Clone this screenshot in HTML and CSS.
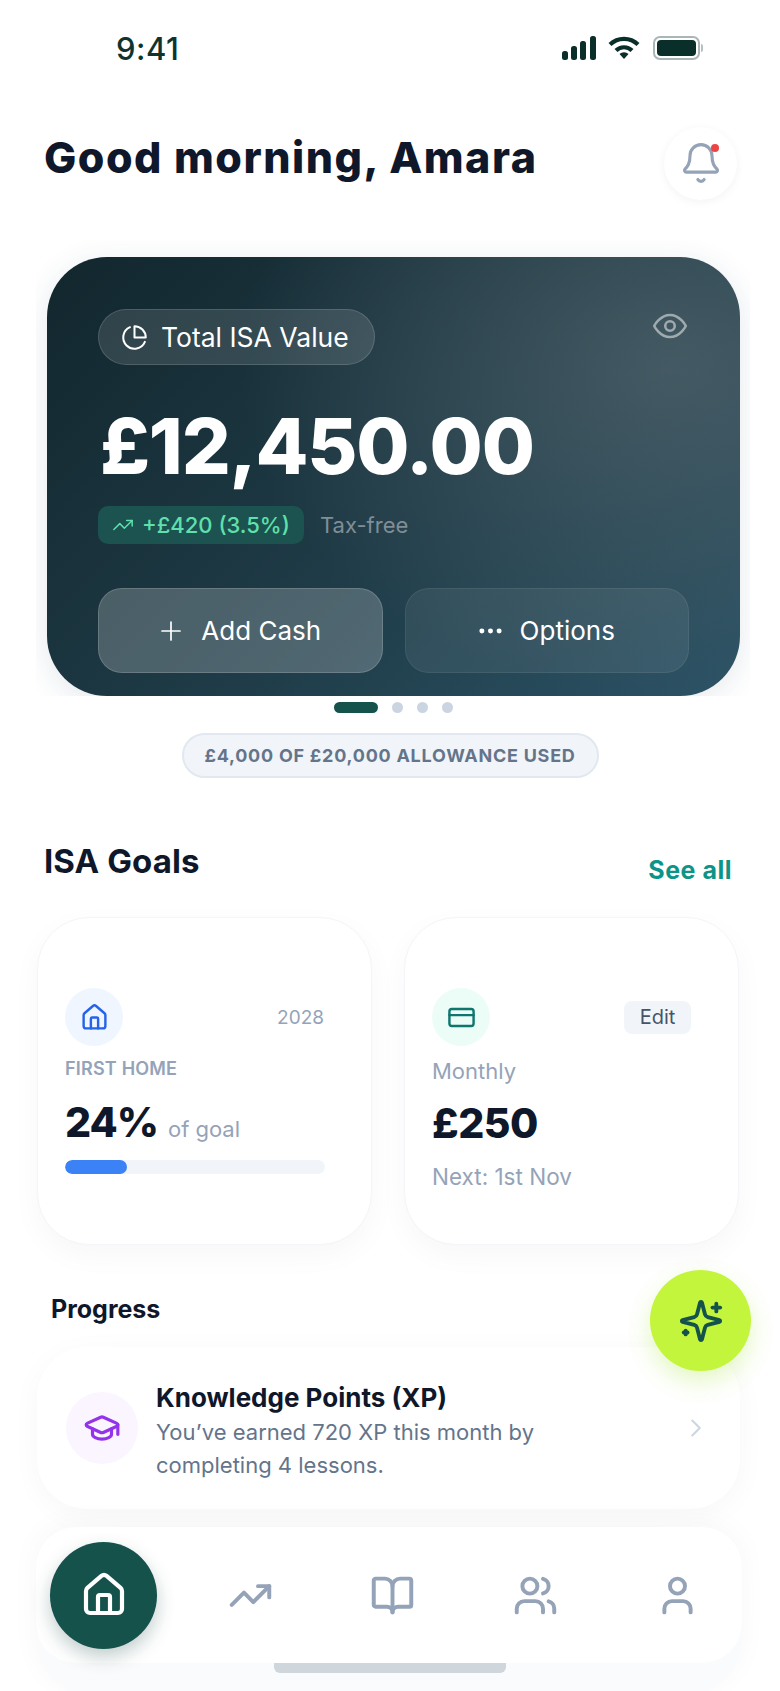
FILE: index.html
```html
<!DOCTYPE html>
<html lang="en">
<head>
<meta charset="utf-8">
<title>ISA Home</title>
<link rel="stylesheet" href="styles.css">
</head>
<body>
<div class="screen">
  <div class="status">
    <span class="time">9:41</span>
    <div class="status-icons">
      <svg class="sig" viewBox="0 0 36 24"><rect x="1" y="15" width="6" height="9" rx="2.5"/><rect x="10" y="10" width="6" height="14" rx="2.5"/><rect x="19" y="5" width="6" height="19" rx="2.5"/><rect x="29" y="0" width="6" height="24" rx="2.5"/></svg>
      <svg class="wifi" viewBox="0 0 32 24"><path d="M2 8.5a20 20 0 0 1 28 0"/><path d="M8 14.5a11.5 11.5 0 0 1 16 0"/><path class="wifi-dot" d="M16 23l-4.5-5a6.5 6.5 0 0 1 9 0z"/></svg>
      <div class="battery"><div class="battery-fill"></div></div>
      <div class="battery-cap"></div>
    </div>
  </div>

  <header class="top">
    <h1 class="greeting">Good morning, Amara</h1>
    <div class="bell">
      <svg class="ic bell-ic" viewBox="0 0 24 24"><path d="M10.268 21a2 2 0 0 0 3.464 0"/><path d="M3.262 15.326A1 1 0 0 0 4 17h16a1 1 0 0 0 .74-1.673C19.41 13.956 18 12.499 18 8A6 6 0 0 0 6 8c0 4.499-1.411 5.956-2.738 7.326"/></svg>
      <span class="bell-dot"></span>
    </div>
  </header>

  <div class="carousel">
    <section class="hero">
      <div class="hero-top">
        <div class="tag">
          <svg class="ic tag-ic" viewBox="0 0 24 24"><path d="M21.21 15.89A10 10 0 1 1 8 2.83"/><path d="M22 12A10 10 0 0 0 12 2v10z"/></svg>
          <span>Total ISA Value</span>
        </div>
        <svg class="ic eye" viewBox="0 0 24 24"><path d="M2 12s3.6-7 10-7 10 7 10 7-3.6 7-10 7-10-7-10-7Z"/><circle cx="12" cy="12" r="3"/></svg>
      </div>
      <div class="amount">£12,450.00</div>
      <div class="gain-row">
        <div class="gain">
          <svg class="ic gain-ic" viewBox="0 0 24 24"><polyline points="22 7 13.5 15.5 8.5 10.5 2 17"/><polyline points="16 7 22 7 22 13"/></svg>
          <span>+£420 (3.5%)</span>
        </div>
        <span class="taxfree">Tax-free</span>
      </div>
      <div class="actions">
        <div class="btn btn-primary">
          <svg class="ic btn-ic" viewBox="0 0 24 24"><path d="M3 12h18"/><path d="M12 3v18"/></svg>
          <span>Add Cash</span>
        </div>
        <div class="btn btn-ghost">
          <svg class="dots-ic" viewBox="0 0 24 6"><circle cx="3" cy="3" r="2.6"/><circle cx="12" cy="3" r="2.6"/><circle cx="21" cy="3" r="2.6"/></svg>
          <span>Options</span>
        </div>
      </div>
    </section>
  </div>

  <div class="pager">
    <span class="pager-active"></span>
    <span class="pager-dot"></span>
    <span class="pager-dot"></span>
    <span class="pager-dot"></span>
  </div>

  <div class="allowance-row"><div class="allowance">£4,000 OF £20,000 ALLOWANCE USED</div></div>

  <div class="section-head">
    <h2 class="section-title">ISA Goals</h2>
    <span class="see-all">See all</span>
  </div>

  <div class="cards">
    <article class="card">
      <div class="card-head">
        <div class="circle circle-blue">
          <svg class="ic circle-ic" viewBox="0 0 24 24"><path d="M15 21v-8a1 1 0 0 0-1-1h-4a1 1 0 0 0-1 1v8"/><path d="M3 10a2 2 0 0 1 .709-1.528l7-5.999a2 2 0 0 1 2.582 0l7 5.999A2 2 0 0 1 21 10v9a2 2 0 0 1-2 2H5a2 2 0 0 1-2-2z"/></svg>
        </div>
        <span class="year">2028</span>
      </div>
      <div class="eyebrow">FIRST HOME</div>
      <div class="pct-line"><span class="big big-pct">24%</span><span class="of-goal">of goal</span></div>
      <div class="track"><div class="fill" style="width:24%"></div></div>
    </article>
    <article class="card">
      <div class="card-head">
        <div class="circle circle-green">
          <svg class="ic circle-ic" viewBox="0 0 24 24"><rect x="2" y="5" width="20" height="14" rx="2"/><line x1="2" y1="10" x2="22" y2="10"/></svg>
        </div>
        <span class="edit">Edit</span>
      </div>
      <div class="monthly">Monthly</div>
      <div class="big big-money">£250</div>
      <div class="next">Next: 1st Nov</div>
    </article>
  </div>

  <h3 class="progress-title">Progress</h3>

  <div class="xp">
    <div class="xp-circle">
      <svg class="ic xp-ic" viewBox="0 0 24 24"><path d="M21.42 10.922a1 1 0 0 0-.019-1.838L12.83 5.18a2 2 0 0 0-1.66 0L2.6 9.08a1 1 0 0 0 0 1.832l8.57 3.908a2 2 0 0 0 1.66 0z"/><path d="M22 10v6"/><path d="M6 12.5V16a6 3 0 0 0 12 0v-3.5"/></svg>
    </div>
    <div class="xp-text">
      <div class="xp-title">Knowledge Points (XP)</div>
      <div class="xp-desc">You’ve earned 720 XP this month by<br>completing 4 lessons.</div>
    </div>
    <svg class="ic chev" viewBox="0 0 24 24"><path d="m9 18 6-6-6-6"/></svg>
  </div>

  <nav class="nav">
    <div class="nav-inner">
      <div class="nav-home">
        <svg class="ic nav-home-ic" viewBox="0 0 24 24"><path d="M15 21v-8a1 1 0 0 0-1-1h-4a1 1 0 0 0-1 1v8"/><path d="M3 10a2 2 0 0 1 .709-1.528l7-5.999a2 2 0 0 1 2.582 0l7 5.999A2 2 0 0 1 21 10v9a2 2 0 0 1-2 2H5a2 2 0 0 1-2-2z"/></svg>
      </div>
      <div class="nav-item"><svg class="ic nav-ic" viewBox="0 0 24 24"><polyline points="22 7 13.5 15.5 8.5 10.5 2 17"/><polyline points="16 7 22 7 22 13"/></svg></div>
      <div class="nav-item"><svg class="ic nav-ic" viewBox="0 0 24 24"><path d="M12 7v14"/><path d="M3 18a1 1 0 0 1-1-1V4a1 1 0 0 1 1-1h5a4 4 0 0 1 4 4 4 4 0 0 1 4-4h5a1 1 0 0 1 1 1v13a1 1 0 0 1-1 1h-6a3 3 0 0 0-3 3 3 3 0 0 0-3-3z"/></svg></div>
      <div class="nav-item"><svg class="ic nav-ic" viewBox="0 0 24 24"><path d="M16 21v-2a4 4 0 0 0-4-4H6a4 4 0 0 0-4 4v2"/><circle cx="9" cy="7" r="4"/><path d="M22 21v-2a4 4 0 0 0-3-3.87"/><path d="M16 3.13a4 4 0 0 1 0 7.75"/></svg></div>
      <div class="nav-item"><svg class="ic nav-ic" viewBox="0 0 24 24"><path d="M19 21v-2a4 4 0 0 0-4-4H9a4 4 0 0 0-4 4v2"/><circle cx="12" cy="7" r="4"/></svg></div>
    </div>
    <div class="home-bar"></div>
  </nav>

  <div class="fab">
    <svg class="ic fab-ic" viewBox="0 0 24 24"><path d="M9.937 15.5A2 2 0 0 0 8.5 14.063l-6.135-1.582a.5.5 0 0 1 0-.962L8.5 9.936A2 2 0 0 0 9.937 8.5l1.582-6.135a.5.5 0 0 1 .963 0L14.063 8.5A2 2 0 0 0 15.5 9.937l6.135 1.581a.5.5 0 0 1 0 .964L15.5 14.063a2 2 0 0 0-1.437 1.437l-1.582 6.135a.5.5 0 0 1-.963 0z"/><path d="M20 3v4"/><path d="M22 5h-4"/><path d="M4 17v2"/><path d="M5 18H3"/></svg>
  </div>
</div>
</body>
</html>
```
FILE: styles.css
```css
* { box-sizing: border-box; }
html, body { margin: 0; padding: 0; background: #fff; }
body { font-family: "Inter", "Liberation Sans", sans-serif; color: #0f172a; }
h1, h2, h3 { margin: 0; }
.screen { position: relative; width: 780px; height: 1691px; overflow: hidden; background: #fff; }
.ic { fill: none; stroke: currentColor; stroke-width: 2; stroke-linecap: round; stroke-linejoin: round; display: block; flex: none; }

.status { height: 96px; display: flex; align-items: center; justify-content: space-between; padding: 0 77px 0 116px; color: #0f3430; }
.time { font-size: 31px; font-weight: 500; letter-spacing: .5px; }
.status-icons { display: flex; align-items: center; }
.sig { width: 36px; height: 24px; fill: #0a2e2a; margin-right: 11px; }
.wifi { width: 32px; height: 24px; margin-right: 13px; fill: none; stroke: #0a2e2a; stroke-width: 4.2; }
.wifi-dot { fill: #0a2e2a; stroke: none; }
.battery { width: 47px; height: 24px; border: 2px solid #a9b6b8; border-radius: 7px; padding: 2px; }
.battery-fill { width: 100%; height: 100%; background: #0a2e2a; border-radius: 4px; }
.battery-cap { width: 2px; height: 8px; background: #b5c0c2; border-radius: 0 2px 2px 0; margin-left: 1px; }

.top { margin-top: 32px; height: 72px; display: flex; align-items: center; justify-content: space-between; padding: 0 43px 0 44px; }
.greeting { font-size: 43px; font-weight: 800; letter-spacing: 1.5px; color: #0f172a; line-height: 1; margin-top: -14px; white-space: nowrap; }
.bell { position: relative; width: 73px; height: 73px; border-radius: 50%; background: #fff; box-shadow: 0 2px 10px rgba(15, 23, 42, .05); display: flex; align-items: center; justify-content: center; color: #94a3b8; margin-top: -2px; }
.bell-ic { width: 44px; height: 44px; stroke-width: 1.7; }
.bell-dot { position: absolute; left: 47px; top: 17px; width: 8px; height: 8px; border-radius: 50%; background: #ef4444; }

.carousel { margin: 40px 30px 0 36px; padding: 17px 0 0 11px; height: 456px; overflow: hidden; }
.hero { width: 693px; height: 439px; border-radius: 60px; padding: 52px 51px 0; color: #fff; box-shadow: 0 6px 30px rgba(30, 64, 100, .12); background: radial-gradient(ellipse 62% 75% at 90% 25%, rgba(80, 98, 106, .75), rgba(80, 98, 106, 0) 100%), linear-gradient(135deg, #12262d 0%, #1f3c48 55%, #2c5366 100%); }
.hero-top { display: flex; justify-content: space-between; align-items: flex-start; }
.tag { height: 56px; width: 277px; border-radius: 28px; border: 1px solid rgba(255, 255, 255, .14); background: rgba(255, 255, 255, .12); display: flex; align-items: center; padding-left: 22px; gap: 13px; font-size: 26.5px; }
.tag-ic { width: 27px; height: 27px; stroke-width: 1.8; }
.eye { width: 38px; height: 38px; stroke-width: 1.6; color: rgba(255, 255, 255, .5); margin-top: -2px; }
.amount { margin-top: 36px; font-size: 77px; font-weight: 800; line-height: 90px; letter-spacing: -1.2px; margin-left: 2px; white-space: nowrap; }
.gain-row { margin-top: 15px; display: flex; align-items: center; gap: 16px; }
.gain { height: 38px; width: 206px; border-radius: 10px; background: #1c5250; color: #5fe0ad; display: flex; align-items: center; padding-left: 14px; gap: 8px; font-size: 22px; font-weight: 500; }
.gain-ic { width: 22px; height: 22px; stroke-width: 1.6; }
.taxfree { font-size: 22px; color: #7f8e97; }
.actions { margin-top: 44px; display: flex; gap: 22px; }
.btn { width: 284.5px; height: 85px; border-radius: 24px; display: flex; align-items: center; justify-content: center; font-size: 26px; font-weight: 400; border: 1px solid; }
.btn-primary { gap: 18px; background: rgba(255, 255, 255, .21); border-color: rgba(255, 255, 255, .16); }
.btn-ghost { gap: 18px; background: rgba(255, 255, 255, .07); border-color: rgba(255, 255, 255, .07); }
.btn-ic { width: 24px; height: 24px; stroke-width: 1.7; }
.dots-ic { width: 23px; height: 6px; fill: #fff; }

.pager { margin-top: 6px; height: 11px; display: flex; justify-content: center; gap: 14px; padding-left: 7px; }
.pager-active { width: 44px; border-radius: 6px; background: #14524b; }
.pager-dot { width: 11px; border-radius: 50%; background: #cbd5e1; }

.allowance-row { margin-top: 20px; display: flex; justify-content: center; }
.allowance { height: 45px; width: 417px; border-radius: 23px; background: #f1f5f9; border: 2px solid #e2e8f0; color: #64748b; font-size: 18px; font-weight: 700; letter-spacing: .75px; display: flex; align-items: center; justify-content: center; white-space: nowrap; }

.section-head { margin-top: 63px; height: 44px; display: flex; justify-content: space-between; padding: 0 48px 0 44px; }
.section-title { font-size: 33px; font-weight: 700; line-height: 40px; color: #0f172a; letter-spacing: .1px; }
.see-all { font-size: 25px; font-weight: 700; color: #0d9488; line-height: 30px; margin-top: 14px; letter-spacing: .5px; }

.cards { margin-top: 32px; padding-left: 37px; display: flex; gap: 32px; }
.card { width: 335px; height: 328px; border-radius: 52px; background: #fff; border: 1px solid #f3f5f8; box-shadow: 0 10px 30px rgba(15, 23, 42, .035); padding: 70px 47px 0 27px; }
.card-head { display: flex; align-items: center; justify-content: space-between; height: 58px; }
.circle { width: 58px; height: 58px; border-radius: 50%; display: flex; align-items: center; justify-content: center; }
.circle-blue { background: #eff6ff; color: #2563eb; }
.circle-green { background: #ecfdf8; color: #0f766e; }
.circle-ic { width: 29px; height: 29px; }
.year { font-size: 19px; color: #94a3b8; }
.eyebrow { margin-top: 12px; font-size: 18px; line-height: 22px; font-weight: 600; color: #94a3b8; letter-spacing: .2px; }
.pct-line { margin-top: 16px; display: flex; align-items: baseline; gap: 10px; line-height: 52px; }
.big { font-size: 43px; font-weight: 800; color: #0f172a; line-height: 52px; }
.big-pct { letter-spacing: -1px; font-size: 41px; }
.of-goal { font-size: 22px; color: #94a3b8; }
.track { margin-top: 5px; height: 14px; border-radius: 7px; background: #f1f5f9; overflow: hidden; width: 260px; }
.fill { height: 100%; background: #3b82f6; border-radius: 7px; }
.edit { width: 67px; height: 33px; border-radius: 8px; background: #f1f5f9; color: #475569; font-size: 20px; display: flex; align-items: center; justify-content: center; }
.monthly { margin-top: 10px; font-size: 22px; line-height: 30px; color: #94a3b8; }
.big-money { margin-top: 11px; font-size: 41px; letter-spacing: -.5px; }
.next { margin-top: 13px; font-size: 22.5px; line-height: 30px; color: #94a3b8; }

.progress-title { margin-top: 48px; padding-left: 51px; font-size: 25px; font-weight: 700; line-height: 32px; color: #0f172a; }

.xp { margin: 22px 40px 0 37px; height: 162px; border-radius: 50px; background: #fff; box-shadow: 0 6px 30px rgba(15, 23, 42, .035); display: flex; align-items: center; padding-left: 29px; }
.xp-circle { width: 72px; height: 72px; border-radius: 50%; background: #faf5ff; color: #9333ea; display: flex; align-items: center; justify-content: center; flex: none; }
.xp-ic { width: 38px; height: 38px; }
.xp-text { margin-left: 18px; width: 528px; align-self: flex-start; padding-top: 33px; }
.xp-title { font-size: 26px; font-weight: 700; line-height: 36px; color: #0f172a; white-space: nowrap; }
.xp-desc { font-size: 22px; line-height: 33px; color: #64748b; white-space: nowrap; }
.chev { width: 30px; height: 30px; color: #cbd5e1; stroke-width: 1.6; margin-left: -3px; }

.nav { margin: 18px 38px 0 36px; height: 170px; border-radius: 40px 40px 60px 60px; background: #fafbfc; box-shadow: 0 -4px 30px rgba(15, 23, 42, .035); }
.nav-inner { height: 136px; border-radius: 40px; background: #fff; display: flex; align-items: center; padding-left: 14px; }
.nav-home { width: 107px; height: 107px; border-radius: 50%; background: #14524b; color: #fff; display: flex; align-items: center; justify-content: center; box-shadow: 0 8px 18px rgba(15, 60, 55, .25); margin-right: 22px; flex: none; }
.nav-home-ic { width: 48px; height: 48px; stroke-width: 2.1; }
.nav-item { width: 142.5px; flex: none; display: flex; justify-content: center; color: #94a3b8; }
.nav-ic { width: 45px; height: 45px; stroke-width: 2.1; }
.home-bar { width: 232px; height: 10px; margin-left: 238px; background: #cfd6dc; border-radius: 0 0 6px 6px; }

.fab { position: absolute; left: 650px; top: 1270px; width: 101px; height: 101px; border-radius: 50%; background: #c3f53c; color: #14524b; display: flex; align-items: center; justify-content: center; box-shadow: 0 10px 24px rgba(163, 230, 53, .3); }
.fab-ic { width: 46px; height: 46px; stroke-width: 2; }
```
